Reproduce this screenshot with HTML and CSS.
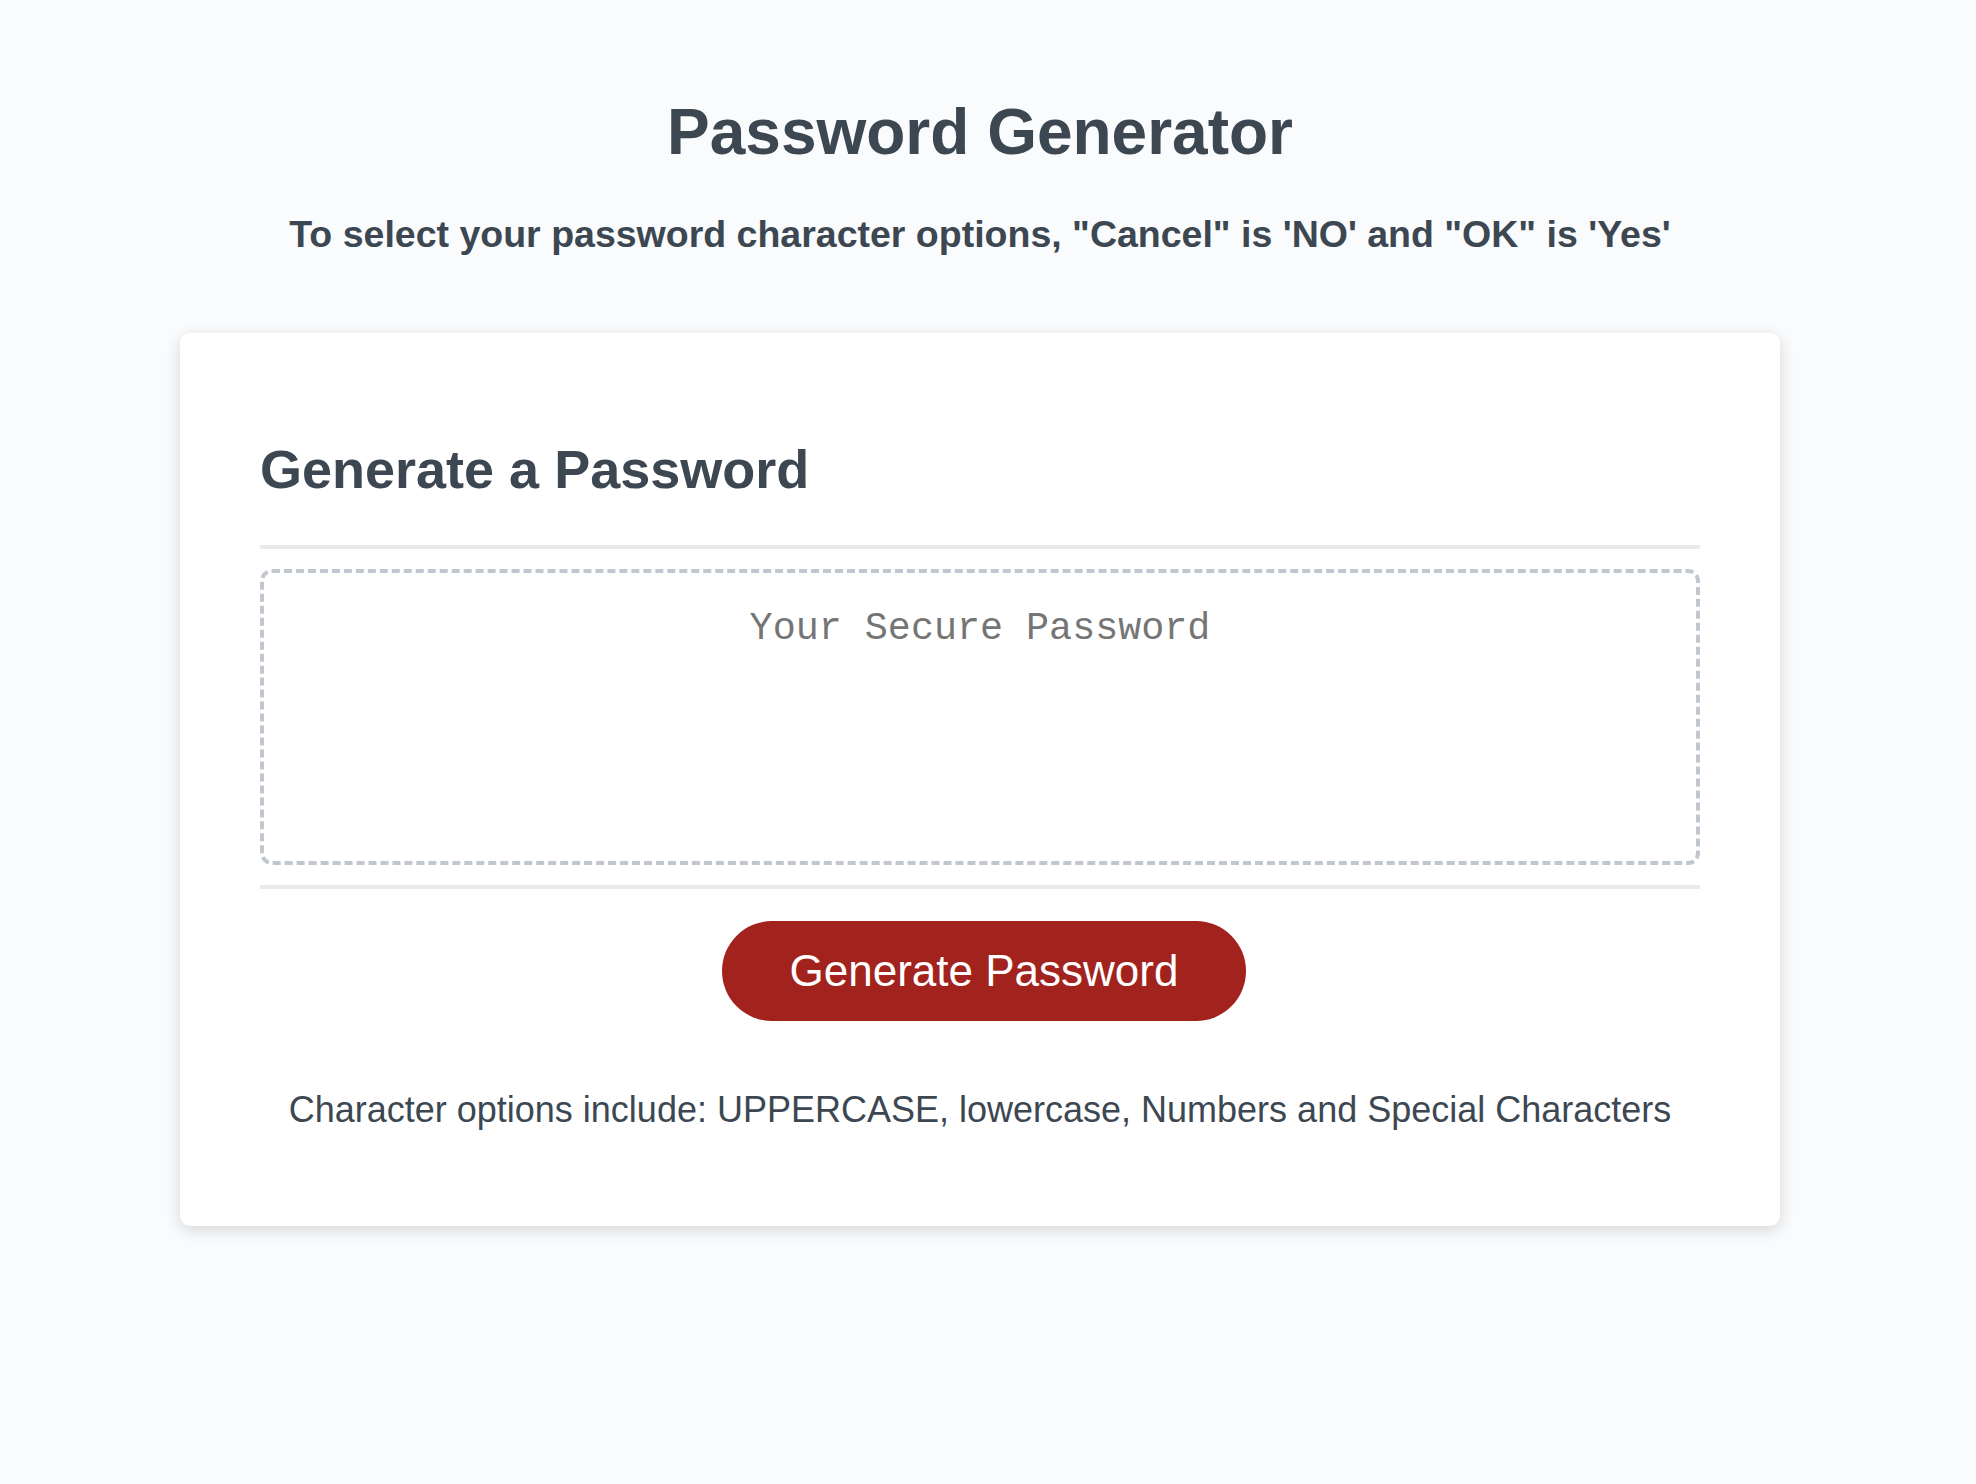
FILE: index.html
```html
<!DOCTYPE html>
<html lang="en">
<head>
<meta charset="UTF-8">
<title>Password Generator</title>
<link rel="stylesheet" href="styles.css">
</head>
<body>
<div class="wrapper">
  <header class="page-header">
    <h1 class="title">Password Generator</h1>
    <h2 class="subtitle">To select your password character options, "Cancel" is 'NO' and "OK" is 'Yes'</h2>
  </header>
  <div class="card">
    <div class="card-header">
      <h2 class="card-title">Generate a Password</h2>
    </div>
    <div class="card-body">
      <textarea class="password" readonly placeholder="Your Secure Password" aria-label="Generated Password"></textarea>
    </div>
    <div class="card-footer">
      <button class="btn" type="button">Generate Password</button>
      <p class="note">Character options include: UPPERCASE, lowercase, Numbers and Special Characters</p>
    </div>
  </div>
</div>
</body>
</html>
```
FILE: styles.css
```css
html, body {
  margin: 0;
  padding: 0;
}

body {
  background-color: #f9fbfd;
  font-family: "Liberation Sans", Arial, Helvetica, sans-serif;
  color: #3c4752;
}

.wrapper {
  width: 1960px;
  padding-top: 95px;
  padding-bottom: 200px;
}

.page-header {
  text-align: center;
}

.title {
  margin: 0;
  font-size: 64px;
  line-height: 74px;
  font-weight: bold;
}

.subtitle {
  margin: 45px 0 0;
  font-size: 37.5px;
  line-height: 41px;
  font-weight: bold;
}

.card {
  box-sizing: border-box;
  width: 1600px;
  margin: 78px auto 0;
  padding: 60px 80px;
  background-color: #ffffff;
  border-radius: 10px;
  box-shadow: rgba(0, 0, 0, 0.15) 0 4px 16px 0;
  font-size: 36px;
}

.card-header::after,
.card-footer::before {
  content: "";
  display: block;
  width: 100%;
  height: 4px;
  background: #e7e9eb;
}

.card-title {
  margin: 45px 0;
  font-size: 54px;
  line-height: 62px;
  font-weight: bold;
}

.card-body {
  padding: 20px 0;
}

.password {
  display: block;
  box-sizing: border-box;
  width: 100%;
  height: 296px;
  margin: 0;
  padding: 34px 30px 166px;
  border: 4px dashed #c0c7cf;
  border-radius: 12px;
  font-family: "Liberation Mono", "Courier New", monospace;
  font-size: 38.4px;
  text-align: center;
  resize: none;
  overflow: hidden;
  background: #ffffff;
  outline: none;
  -webkit-appearance: none;
  appearance: none;
}

.password::placeholder {
  color: #757575;
}

.card-footer {
  display: flex;
  flex-direction: column;
  align-items: center;
}

.card-footer::before {
  align-self: stretch;
}

.btn {
  border: none;
  background-color: #a2231d;
  border-radius: 50px;
  color: #ffffff;
  font-family: "Liberation Sans", Arial, Helvetica, sans-serif;
  font-size: 44px;
  line-height: 44px;
  margin: 32px 32px 32px 40px;
  padding: 28px 68px;
  cursor: pointer;
}

.note {
  margin: 36px 0;
  font-size: 36px;
  line-height: 41px;
  text-align: center;
}
```
